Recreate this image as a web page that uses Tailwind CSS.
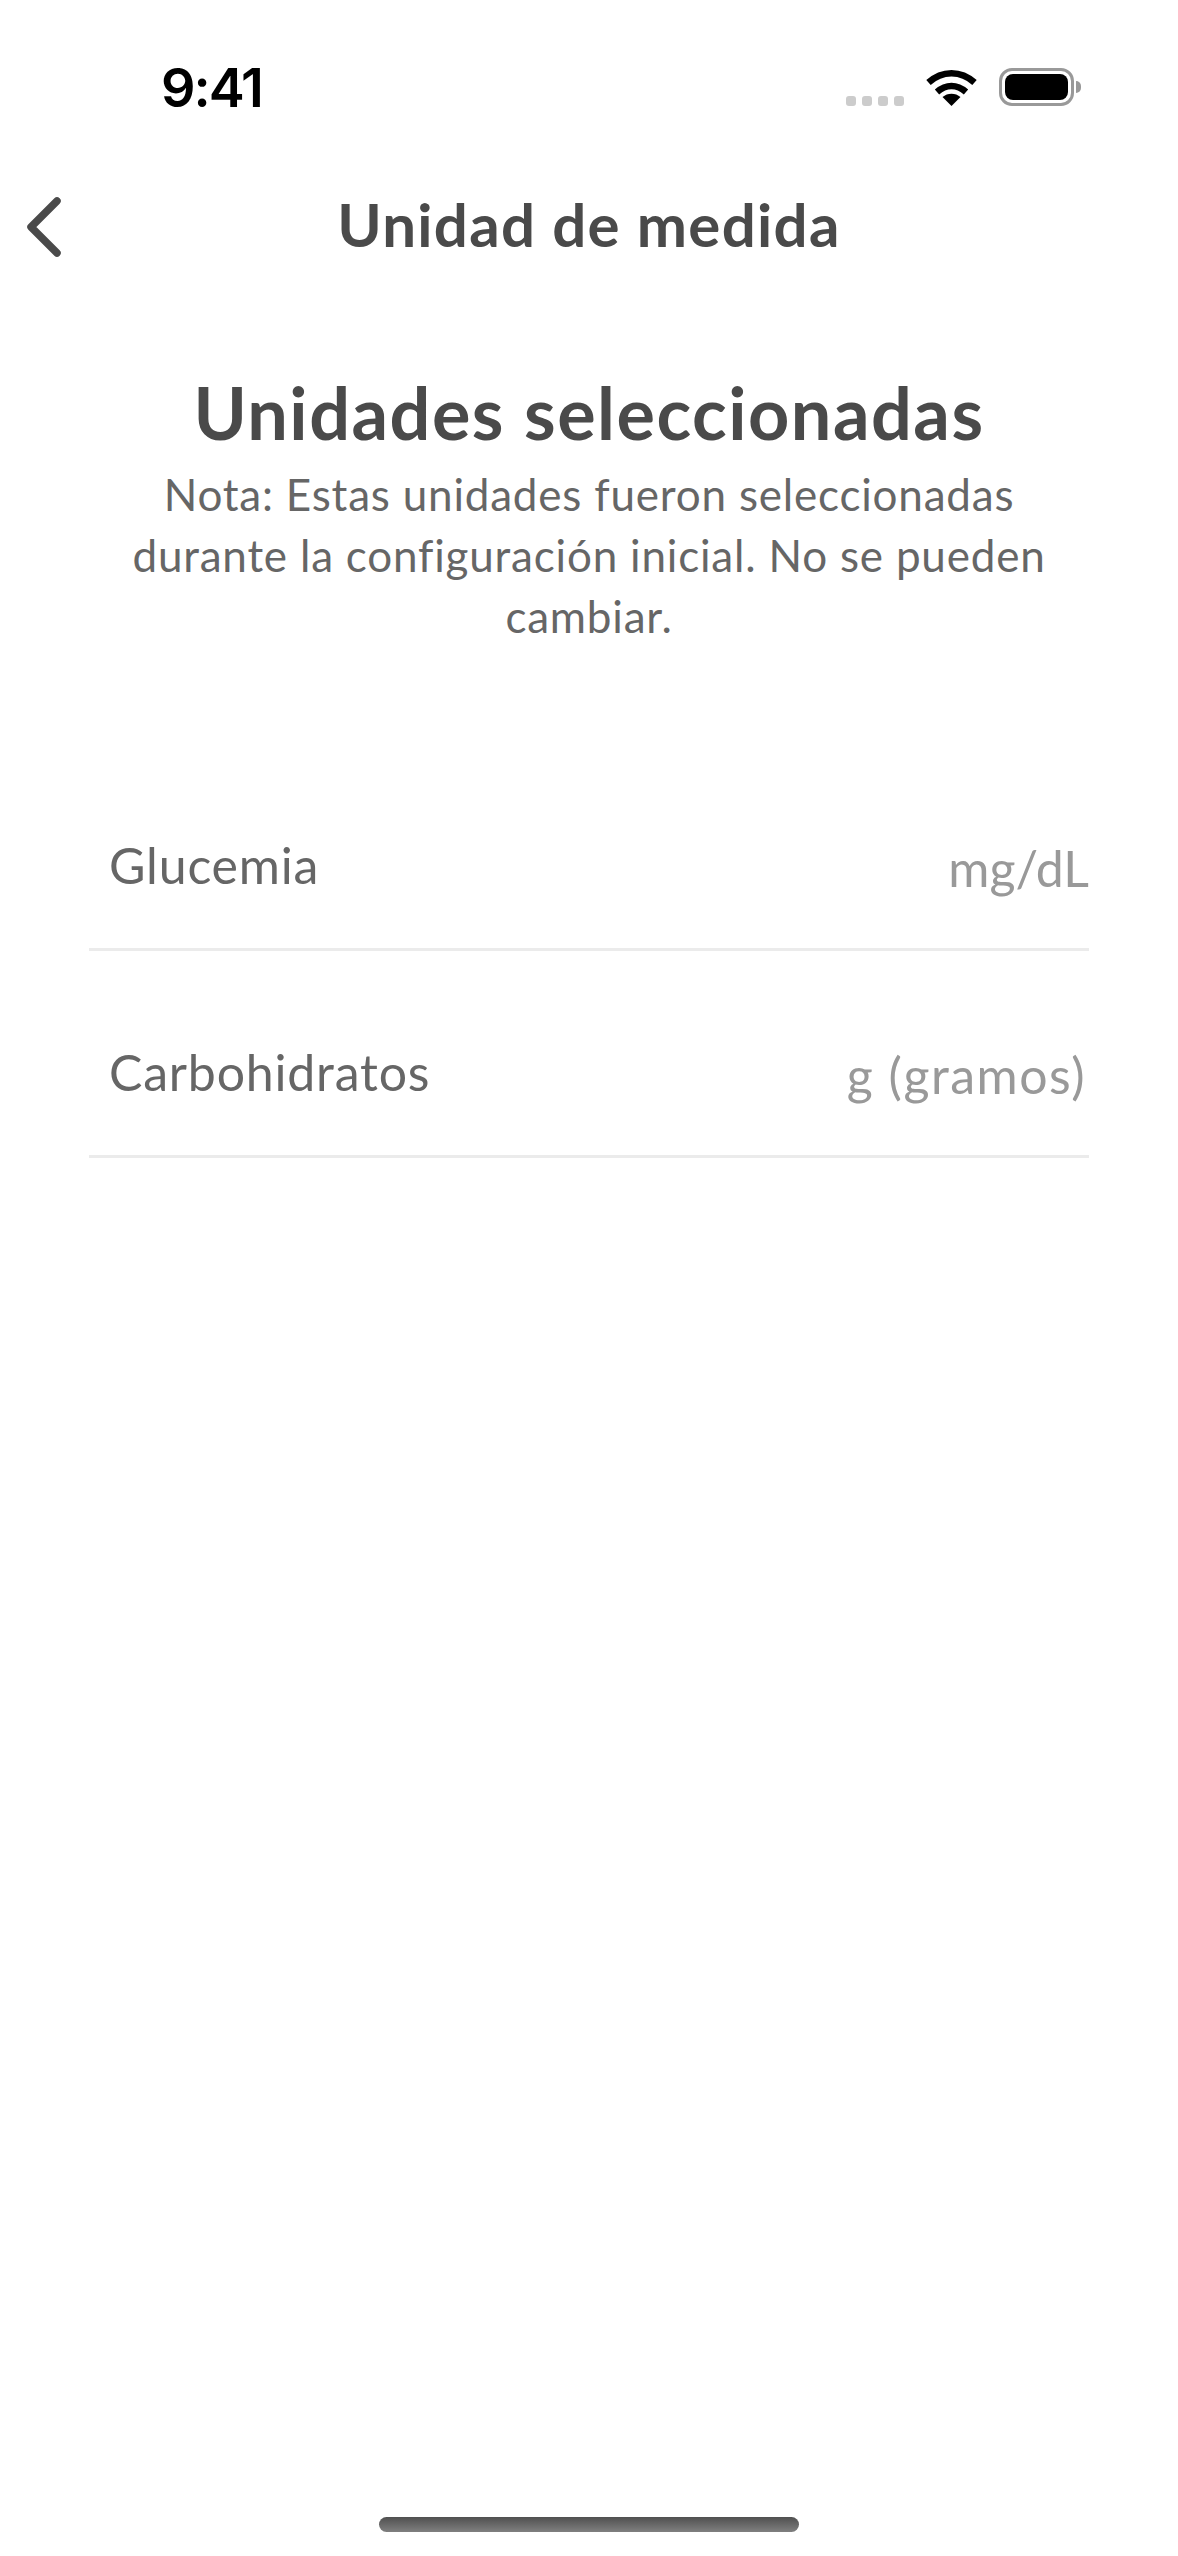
<!DOCTYPE html>
<html lang="es">
<head>
    <meta charset="UTF-8">
    <meta name="viewport" content="width=device-width, initial-scale=1.0">
    <title>Unidad de medida</title>
    <script src="https://cdn.jsdelivr.net/npm/@tailwindcss/browser@4"></script>
</head>
<body class="bg-white font-['Lato',sans-serif]">
    <div class="w-[1178px] h-[2556px] flex flex-col overflow-hidden">
        <!-- Barra de estado -->
        <div class="h-[176px] shrink-0 flex justify-between pl-[161px] pr-[97px] pt-[58px]">
            <span class="font-['Inter',sans-serif] font-semibold text-[54px] leading-[60px] text-black tracking-[-2px]">9:41</span>
            <div class="flex items-start">
                <div class="flex gap-[6px] mt-[38px] mr-[22px]">
                    <span class="w-[10px] h-[10px] rounded-[3px] bg-[#cccccc]"></span>
                    <span class="w-[10px] h-[10px] rounded-[3px] bg-[#cccccc]"></span>
                    <span class="w-[10px] h-[10px] rounded-[3px] bg-[#cccccc]"></span>
                    <span class="w-[10px] h-[10px] rounded-[3px] bg-[#cccccc]"></span>
                </div>
                <svg class="w-[51px] h-[37px] mt-[11px] mr-[22px]" viewBox="0 0 51 37" fill="none" stroke="#000">
                    <path d="M2.5 13.5C16 1 35 1 48.5 13.5" stroke-width="6.5"/>
                    <path d="M11 23C20 15 31 15 40 23" stroke-width="6.5"/>
                    <path d="M25.5 37L16.5 28C21.5 23.5 29.5 23.5 34.5 28Z" fill="#000" stroke="none"/>
                </svg>
                <div class="flex items-center mt-[10px]">
                    <div class="w-[75px] h-[38px] rounded-[13px] border-[3px] border-[#999999] p-[3px]">
                        <div class="w-full h-full rounded-[8px] bg-black"></div>
                    </div>
                    <div class="w-[5px] h-[12px] ml-[2px] rounded-r-full bg-[#999999]"></div>
                </div>
            </div>
        </div>
        <!-- Cabecera -->
        <header class="relative h-[96px] shrink-0 flex items-center justify-center">
            <svg class="absolute left-[24px] top-[21px] w-[40px] h-[60px]" viewBox="0 0 40 60" fill="none" stroke="#4a4a4a" stroke-width="7.5" stroke-linecap="round" stroke-linejoin="round">
                <path d="M33 4L7 30L33 56"/>
            </svg>
            <h1 class="font-bold text-[60px] leading-[64px] tracking-[1.3px] text-[#4a4a4a]">Unidad de medida</h1>
        </header>
        <main class="flex flex-col items-center pt-[98px]">
            <h2 class="font-bold text-[72px] leading-[84px] tracking-[1.5px] text-[#4a4a4a]">Unidades seleccionadas</h2>
            <p class="w-[940px] mt-[10px] text-center text-[44px] leading-[61px] tracking-[0.8px] text-[#666666]">Nota: Estas unidades fueron seleccionadas durante la configuración inicial. No se pueden cambiar.</p>
            <!-- Lista de unidades -->
            <div class="w-[1000px] mt-[97px] flex flex-col text-[50px]">
                <div class="h-[207px] flex justify-between items-end pl-[20px] pb-[53px] border-b-[3px] border-[#ebebeb]">
                    <span class="text-[#666666] leading-[60px] tracking-[0.8px]">Glucemia</span>
                    <span class="text-[#999999] leading-[60px] relative top-[3px]">mg/dL</span>
                </div>
                <div class="h-[207px] flex justify-between items-end pl-[20px] pr-[3px] pb-[53px] border-b-[3px] border-[#ebebeb]">
                    <span class="text-[#666666] leading-[60px] tracking-[0.8px]">Carbohidratos</span>
                    <span class="text-[#999999] leading-[60px] tracking-[1.5px] relative top-[3px]">g (gramos)</span>
                </div>
            </div>
        </main>
        <!-- Indicador de inicio -->
        <div class="mt-auto mb-[24px] mx-auto w-[420px] h-[15px] rounded-[8px] bg-gradient-to-b from-[#505050] to-[#808080]"></div>
    </div>
</body>
</html>
